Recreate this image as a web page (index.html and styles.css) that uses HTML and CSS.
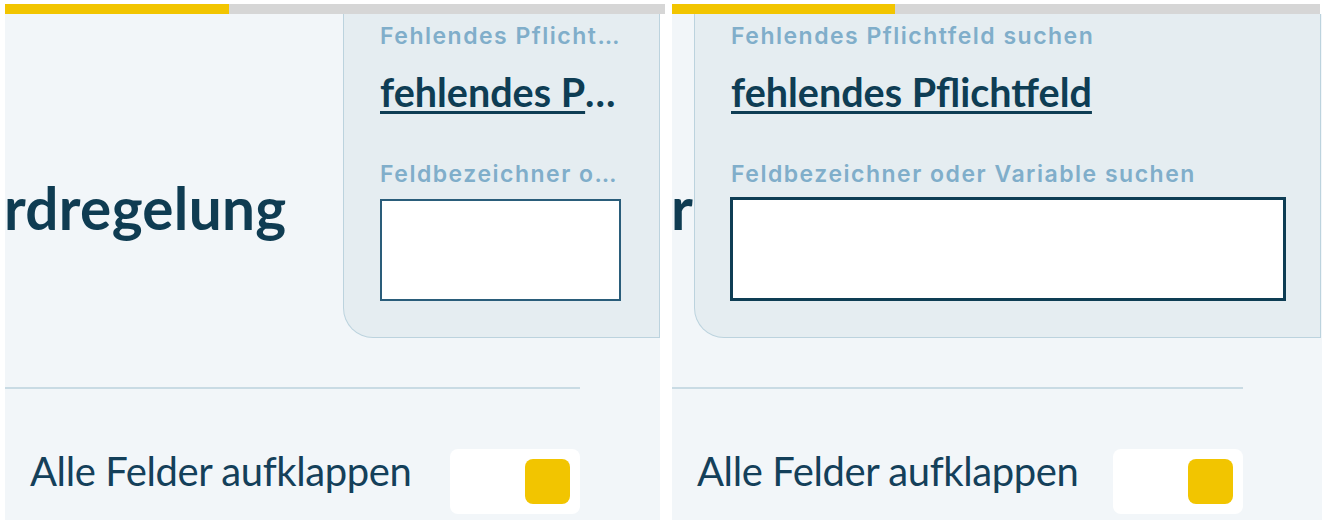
FILE: index.html
```html
<!DOCTYPE html>
<html lang="de">
<head>
<meta charset="utf-8">
<title>Pflichtfeldregelung</title>
<link rel="stylesheet" href="styles.css">
</head>
<body>
<div class="frames">
  <section class="frame frame--narrow">
    <div class="progress"><div class="progress-fill" style="width:34%"></div></div>
    <div class="frame-body">
      <div class="hero">
        <h1 class="title">rdregelung</h1>
        <aside class="search-card">
          <div class="field-label" title="Fehlendes Pflichtfeld suchen">Fehlendes Pflicht…</div>
          <a class="field-link" href="#" title="fehlendes Pflichtfeld">fehlendes P</a><span class="field-link-more">…</span>
          <div class="field-label field-label--second" title="Feldbezeichner oder Variable suchen">Feldbezeichner o…</div>
          <div class="field-input"></div>
        </aside>
      </div>
      <div class="divider"></div>
      <div class="toggle-row">
        <span class="toggle-label">Alle Felder aufklappen</span>
        <span class="toggle"><span class="toggle-knob"></span></span>
      </div>
    </div>
  </section>
  <section class="frame frame--wide">
    <div class="progress"><div class="progress-fill" style="width:34.4%"></div></div>
    <div class="frame-body">
      <div class="hero">
        <h1 class="title">rdregelung</h1>
        <aside class="search-card">
          <div class="field-label">Fehlendes Pflichtfeld suchen</div>
          <a class="field-link" href="#">fehlendes Pflichtfeld</a>
          <div class="field-label field-label--second">Feldbezeichner oder Variable suchen</div>
          <div class="field-input field-input--focus"></div>
        </aside>
      </div>
      <div class="divider"></div>
      <div class="toggle-row">
        <span class="toggle-label">Alle Felder aufklappen</span>
        <span class="toggle"><span class="toggle-knob"></span></span>
      </div>
    </div>
  </section>
</div>
</body>
</html>
```

FILE: styles.css
```css
* { box-sizing: border-box; }

html, body {
  margin: 0;
  padding: 0;
  background: #ffffff;
}

body {
  font-family: "Lato", "Liberation Sans", sans-serif;
  color: #0e3d54;
}

.frames {
  display: flex;
  padding: 4px 0 0 5px;
  gap: 12px;
}

.frame {
  display: flex;
  flex-direction: column;
}

.frame--narrow { width: 655px; }
.frame--wide { width: 650px; }

.progress {
  height: 10px;
  background: #d6d6d6;
  display: flex;
}

.frame--narrow .progress { width: 660px; }
.frame--wide .progress { width: 648px; }

.progress-fill {
  height: 100%;
  background: #f2c500;
}

.frame-body {
  background: #f2f6f9;
  height: 506px;
  overflow: hidden;
}

.hero {
  display: grid;
  grid-template-columns: 1fr;
  height: 324px;
}

.title {
  grid-area: 1 / 1;
  align-self: start;
  justify-self: start;
  margin: 154px 0 0 -1px;
  font-family: "Lato", sans-serif;
  font-weight: 700;
  font-size: 58.5px;
  line-height: 78px;
  letter-spacing: 0.3px;
  color: #0f3c52;
  white-space: nowrap;
}

.frame--wide .title {
  width: 23px;
  overflow: hidden;
}

.search-card {
  grid-area: 1 / 1;
  justify-self: end;
  position: relative;
  z-index: 1;
  height: 324px;
  background: #e5edf1;
  border: 1px solid #bcd3de;
  border-top: none;
  border-bottom-left-radius: 30px;
  padding: 9px 38px 0 36px;
  min-width: 0;
}

.frame--narrow .search-card { width: 317px; }
.frame--wide .search-card { width: 627px; margin-right: 1px; }

.field-label {
  font-family: "Inter", "Lato", sans-serif;
  font-weight: 600;
  font-size: 23px;
  line-height: 26px;
  letter-spacing: 1.5px;
  color: #80aeca;
  white-space: nowrap;
}

.field-label--second { margin-top: 46px; }

.field-link {
  display: inline-block;
  margin-top: 20px;
  font-family: "Lato", sans-serif;
  font-weight: 700;
  font-size: 39.5px;
  line-height: 46px;
  color: #0e3d54;
  text-decoration: underline;
  text-decoration-thickness: 3px;
  text-underline-offset: 4px;
  white-space: nowrap;
}

.field-link-more {
  font-family: "Lato", sans-serif;
  font-weight: 700;
  font-size: 39.5px;
  line-height: 46px;
  color: #0e3d54;
}

.field-input {
  margin-top: 12px;
  height: 102px;
  background: #ffffff;
  border: 2px solid #2a5d7a;
}

.field-input--focus {
  margin-top: 10px;
  height: 104px;
  margin-right: -4px;
  margin-left: -1px;
  border: 3px solid #0e3d54;
}

.divider {
  margin-top: 49px;
  width: 575px;
  height: 2px;
  background: #c9dbe4;
}

.frame--wide .divider { width: 571px; }

.toggle-row {
  width: 575px;
  margin-top: 58px;
  padding-left: 25px;
  display: flex;
  align-items: center;
  justify-content: space-between;
}

.frame--wide .toggle-row { width: 571px; }

.toggle-label {
  margin-bottom: 20px;
  font-family: "Lato", sans-serif;
  font-weight: 400;
  font-size: 40px;
  letter-spacing: -0.4px;
  color: #14405a;
}

.toggle {
  width: 130px;
  height: 65px;
  background: #ffffff;
  border-radius: 8px;
  display: flex;
  align-items: center;
  justify-content: flex-end;
  padding-right: 10px;
}

.toggle-knob {
  width: 45px;
  height: 45px;
  background: #f2c500;
  border-radius: 8px;
}
```
